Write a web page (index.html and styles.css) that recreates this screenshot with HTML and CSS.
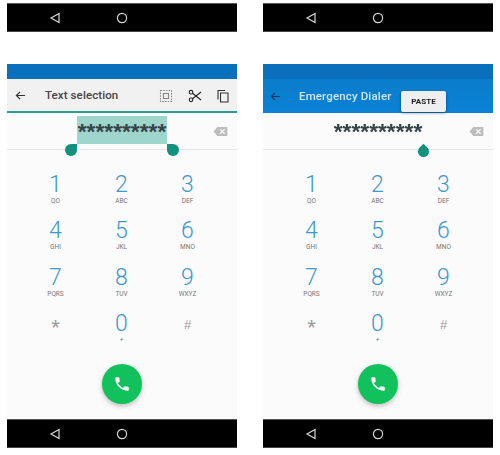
FILE: index.html
```html
<!DOCTYPE html>
<html lang="en">
<head>
<meta charset="utf-8">
<title>Dialer</title>
<link rel="stylesheet" href="styles.css">
</head>
<body>
<main class="stage">
  <section class="phone">
    <div class="nav nav-top">
      <svg class="nav-icon" viewBox="0 0 12 12"><path d="M10 1.500V10.500L2 6Z"/></svg>
      <svg class="nav-icon" viewBox="0 0 12 12"><circle cx="6" cy="6" r="4.600"/></svg>
    </div>
    <div class="screen">
      <div class="status"></div>
      <div class="toolbar toolbar-select">
        <svg class="back" viewBox="0 0 12 12"><path d="M11 6H1.500M5.500 2L1.500 6L5.500 10"/></svg>
        <span class="title title-dark">Text selection</span>
        <svg class="tool tool-select" viewBox="0 0 14 14"><rect x="1.500" y="1.500" width="11" height="11" stroke-dasharray="1.500 1.200"/><rect x="4.500" y="4.500" width="5" height="5"/></svg>
        <svg class="tool tool-cut" viewBox="0 0 14 14"><circle cx="3" cy="3.200" r="1.800"/><circle cx="3" cy="10.800" r="1.800"/><path d="M4.500 4.300L13 11M4.500 9.700L13 3"/></svg>
        <svg class="tool tool-copy" viewBox="0 0 14 14"><path d="M2 10.500V1.500H9"/><path d="M4.500 4H12V13H4.500Z"/></svg>
      </div>
      <div class="entry">
        <span class="code code-selected">**********</span>
        <i class="handle handle-left"></i>
        <i class="handle handle-right"></i>
        <svg class="erase" viewBox="0 0 16 12"><path class="erase-body" d="M4.500 1H15.500V11H4.500L0.500 6Z"/><path class="erase-x" d="M7.500 3.500L12.500 8.500M12.500 3.500L7.500 8.500"/></svg>
      </div>
      <div class="keypad">
        <div class="key"><b>1</b><small>QO</small></div>
        <div class="key"><b>2</b><small>ABC</small></div>
        <div class="key"><b>3</b><small>DEF</small></div>
        <div class="key"><b>4</b><small>GHI</small></div>
        <div class="key"><b>5</b><small>JKL</small></div>
        <div class="key"><b>6</b><small>MNO</small></div>
        <div class="key"><b>7</b><small>PQRS</small></div>
        <div class="key"><b>8</b><small>TUV</small></div>
        <div class="key"><b>9</b><small>WXYZ</small></div>
        <div class="key key-sym"><b>*</b></div>
        <div class="key"><b>0</b><small>+</small></div>
        <div class="key key-sym key-hash"><b>#</b></div>
      </div>
      <div class="call">
        <svg viewBox="0 0 24 24"><path d="M6.600 10.800c1.400 2.800 3.800 5.100 6.600 6.600l2.200-2.200c.3-.3.7-.4 1-.2 1.100.4 2.300.6 3.600.6.600 0 1 .4 1 1V20c0 .6-.4 1-1 1C10.600 21 3 13.400 3 4c0-.6.400-1 1-1h3.500c.6 0 1 .4 1 1 0 1.300.2 2.500.6 3.600.1.300 0 .7-.2 1z"/></svg>
      </div>
    </div>
    <div class="nav nav-bottom">
      <svg class="nav-icon" viewBox="0 0 12 12"><path d="M10 1.500V10.500L2 6Z"/></svg>
      <svg class="nav-icon" viewBox="0 0 12 12"><circle cx="6" cy="6" r="4.600"/></svg>
    </div>
  </section>

  <section class="phone">
    <div class="nav nav-top">
      <svg class="nav-icon" viewBox="0 0 12 12"><path d="M10 1.500V10.500L2 6Z"/></svg>
      <svg class="nav-icon" viewBox="0 0 12 12"><circle cx="6" cy="6" r="4.600"/></svg>
    </div>
    <div class="screen">
      <div class="status status-blue"></div>
      <div class="toolbar toolbar-blue">
        <svg class="back back-blue" viewBox="0 0 12 12"><path d="M11 6H1.500M5.500 2L1.500 6L5.500 10"/></svg>
        <span class="title title-light">Emergency Dialer</span>
        <div class="paste">PASTE</div>
      </div>
      <div class="entry">
        <span class="code">**********</span>
        <i class="drop"></i>
        <svg class="erase" viewBox="0 0 16 12"><path class="erase-body" d="M4.500 1H15.500V11H4.500L0.500 6Z"/><path class="erase-x" d="M7.500 3.500L12.500 8.500M12.500 3.500L7.500 8.500"/></svg>
      </div>
      <div class="keypad">
        <div class="key"><b>1</b><small>QO</small></div>
        <div class="key"><b>2</b><small>ABC</small></div>
        <div class="key"><b>3</b><small>DEF</small></div>
        <div class="key"><b>4</b><small>GHI</small></div>
        <div class="key"><b>5</b><small>JKL</small></div>
        <div class="key"><b>6</b><small>MNO</small></div>
        <div class="key"><b>7</b><small>PQRS</small></div>
        <div class="key"><b>8</b><small>TUV</small></div>
        <div class="key"><b>9</b><small>WXYZ</small></div>
        <div class="key key-sym"><b>*</b></div>
        <div class="key"><b>0</b><small>+</small></div>
        <div class="key key-sym key-hash"><b>#</b></div>
      </div>
      <div class="call">
        <svg viewBox="0 0 24 24"><path d="M6.600 10.800c1.400 2.800 3.800 5.100 6.600 6.600l2.200-2.200c.3-.3.7-.4 1-.2 1.100.4 2.300.6 3.600.6.600 0 1 .4 1 1V20c0 .6-.4 1-1 1C10.600 21 3 13.400 3 4c0-.6.400-1 1-1h3.500c.6 0 1 .4 1 1 0 1.300.2 2.500.6 3.600.1.300 0 .7-.2 1z"/></svg>
      </div>
    </div>
    <div class="nav nav-bottom">
      <svg class="nav-icon" viewBox="0 0 12 12"><path d="M10 1.500V10.500L2 6Z"/></svg>
      <svg class="nav-icon" viewBox="0 0 12 12"><circle cx="6" cy="6" r="4.600"/></svg>
    </div>
  </section>
</main>
</body>
</html>
```
FILE: styles.css
```css
* { box-sizing: border-box; }
html, body { margin: 0; padding: 0; background: #fff; }
body { width: 500px; height: 455px; overflow: hidden; font-family: "Roboto", "Liberation Sans", sans-serif; }
.stage { display: flex; gap: 26px; padding: 3px 7px 0; filter: blur(.35px); }
.phone { width: 230px; display: flex; flex-direction: column; }

.nav { height: 29px; background: #000; display: flex; align-items: center; padding-left: 42px; gap: 55px; border-top: 1px solid #555; border-bottom: 1px solid #444; }
.nav-top { margin-bottom: 32px; }
.nav-icon { width: 12px; height: 12px; fill: none; stroke: #d8d8d8; stroke-width: 1.2; }

.screen { position: relative; height: 355px; background: #fbfbfb; display: flex; flex-direction: column; }
.status { height: 15px; background: #0a70bd; }
.toolbar { height: 34px; display: flex; align-items: center; position: relative; }
.toolbar-select { background: #f1f1f1; border-bottom: 2px solid #2b9d90; }
.toolbar-blue { background: linear-gradient(#0a7ccb, #0a82d6); }
.back { width: 11px; height: 11px; margin-left: 8px; fill: none; stroke: #333; stroke-width: 1.3; }
.back-blue { margin-left: 7px; stroke: #06375f; }
.title { font-size: 11.500px; font-weight: 500; }
.title-dark { margin-left: 19px; color: #444; letter-spacing: .1px; }
.title-light { margin-left: 18px; color: #cfe6f7; letter-spacing: .15px; }

.tool { position: absolute; top: 10px; width: 14px; height: 14px; fill: none; stroke: #3a3a3a; stroke-width: 1.1; }
.tool-select { left: 152px; stroke: #888; }
.tool-cut { left: 181px; stroke: #222; }
.tool-copy { left: 209px; stroke: #333; }

.paste { position: absolute; left: 138px; top: 12px; width: 45px; height: 21px; background: #efefef; border-radius: 2px; box-shadow: 0 1px 3px rgba(0,0,0,.45); color: #222; font-size: 8px; font-weight: 700; display: flex; align-items: center; justify-content: center; }

.entry { position: relative; height: 37px; border-bottom: 1px solid #e6e6e6; display: flex; justify-content: center; padding-top: 3px; }
.code { width: 90px; height: 28px; text-align: center; color: #36444a; font-size: 22.800px; font-weight: 700; line-height: 30px; white-space: nowrap; font-family: "Liberation Sans", sans-serif; }
.code-selected { background: #9fd6cb; }
.erase { position: absolute; left: 206px; top: 13px; width: 15px; height: 11px; }
.erase-body { fill: #bdbdbd; }
.erase-x { fill: none; stroke: #f5f5f5; stroke-width: 1.4; }

.handle { position: absolute; top: 31px; width: 12px; height: 12px; background: #12917f; border-radius: 50%; }
.handle-left { left: 58px; border-top-right-radius: 0; }
.handle-right { left: 160px; border-top-left-radius: 0; }
.drop { position: absolute; left: 155px; top: 33px; width: 11px; height: 11px; background: #12917f; border-radius: 50% 0 50% 50%; transform: rotate(-45deg); }

.keypad { display: grid; grid-template-columns: repeat(3, 66px); grid-auto-rows: 46.300px; padding: 22px 0 0 15.500px; }
.key { display: flex; flex-direction: column; align-items: center; }
.key b { font-weight: 300; font-size: 23px; line-height: 25px; color: #3d98cf; }
.key small { font-size: 6.500px; line-height: 8px; color: #777; }
.key-sym b { color: #999; font-size: 22px; line-height: 34px; font-family: "Liberation Sans", sans-serif; font-weight: 400; }
.key-hash b { font-size: 13px; line-height: 27px; }

.call { position: absolute; left: 95px; top: 300px; width: 40px; height: 40px; border-radius: 50%; background: #11c15b; box-shadow: 0 2px 5px rgba(0,0,0,.25); display: flex; align-items: center; justify-content: center; }
.call svg { width: 18px; height: 18px; fill: #fff; }
```
